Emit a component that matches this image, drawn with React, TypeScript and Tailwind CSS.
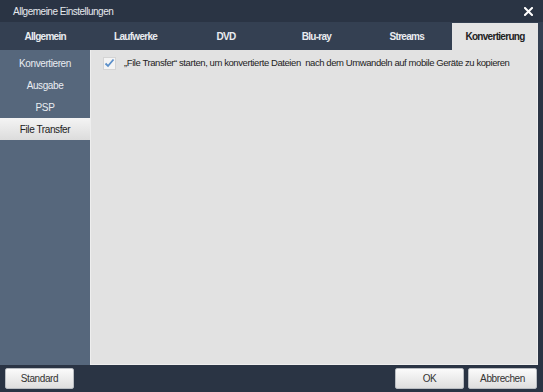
import React from 'react';

const tabs = ['Allgemein', 'Laufwerke', 'DVD', 'Blu-ray', 'Streams', 'Konvertierung'];
const sideItems = ['Konvertieren', 'Ausgabe', 'PSP', 'File Transfer'];

const Btn: React.FC<{ label: string }> = ({ label }) => (
  <button className="w-[69px] h-[21px] rounded-[2px] border border-[#b9bdc2] bg-gradient-to-b from-[#fbfbfb] to-[#dedede] text-[10px] tracking-[-0.4px] text-[#333]">
    {label}
  </button>
);

export default function App() {
  return (
    <div className="w-[543px] h-[392px] flex flex-col bg-[#2a3444] font-['Liberation_Sans',Arial,sans-serif] select-none">
      <div className="h-[22px] flex items-center justify-between pl-[13px] pr-[10px] text-[10px] tracking-[-0.5px] text-[#e6e9ee]">
        <span>Allgemeine Einstellungen</span>
        <svg width="9" height="9" viewBox="0 0 9 9">
          <path d="M1 1 L8 8 M8 1 L1 8" stroke="#ffffff" strokeWidth="2" strokeLinecap="square" />
        </svg>
      </div>
      <div className="h-[28px] flex bg-[#344052] pr-[5px]">
        {tabs.map((t, i) => {
          const active = i === tabs.length - 1;
          return (
            <div
              key={t}
              className={
                active
                  ? 'w-[86px] mt-[1px] flex items-center justify-center bg-[#e4e4e4] text-[10px] tracking-[-0.7px] font-bold text-[#222]'
                  : 'flex-1 flex items-center justify-center text-[10px] tracking-[-0.7px] font-bold text-[#e9ecf0]'
              }
            >
              {t}
            </div>
          );
        })}
      </div>
      <div className="flex h-[315px] pr-[5px]">
        <div className="w-[90px] bg-[#56677c] flex flex-col pt-[2px]">
          {sideItems.map((s, i) => {
            const active = i === sideItems.length - 1;
            return (
              <div
                key={s}
                className={
                  active
                    ? 'h-[22px] flex items-center justify-center bg-gradient-to-b from-[#f4f4f4] to-[#dcdcdc] text-[10px] tracking-[-0.4px] text-[#222]'
                    : 'h-[22px] flex items-center justify-center text-[10px] tracking-[-0.4px] text-[#e9edf2]'
                }
              >
                {s}
              </div>
            );
          })}
        </div>
        <div className="flex-1 bg-[#e2e2e2] border-l border-r border-b border-[#eeeeee] px-[12px] pt-[6px]">
          <div className="flex items-center gap-[8px]">
            <div className="w-[13px] h-[13px] bg-[#f4f4f4] border border-[#d4d4d4] flex items-center justify-center">
              <svg width="11" height="10" viewBox="0 0 11 10">
                <path d="M1.5 5.5 L4 8 L9.5 1.5" stroke="#5b8fc9" strokeWidth="1.8" fill="none" />
              </svg>
            </div>
            <span className="text-[9.5px] tracking-[-0.42px] text-[#222] whitespace-nowrap">
              „File Transfer“ starten, um konvertierte Dateien&nbsp; nach dem Umwandeln auf mobile Geräte zu kopieren
            </span>
          </div>
        </div>
      </div>
      <div className="flex-1 flex items-center justify-between pl-[5px] pr-[6px]">
        <Btn label="Standard" />
        <div className="flex gap-[4px]">
          <Btn label="OK" />
          <Btn label="Abbrechen" />
        </div>
      </div>
    </div>
  );
}
